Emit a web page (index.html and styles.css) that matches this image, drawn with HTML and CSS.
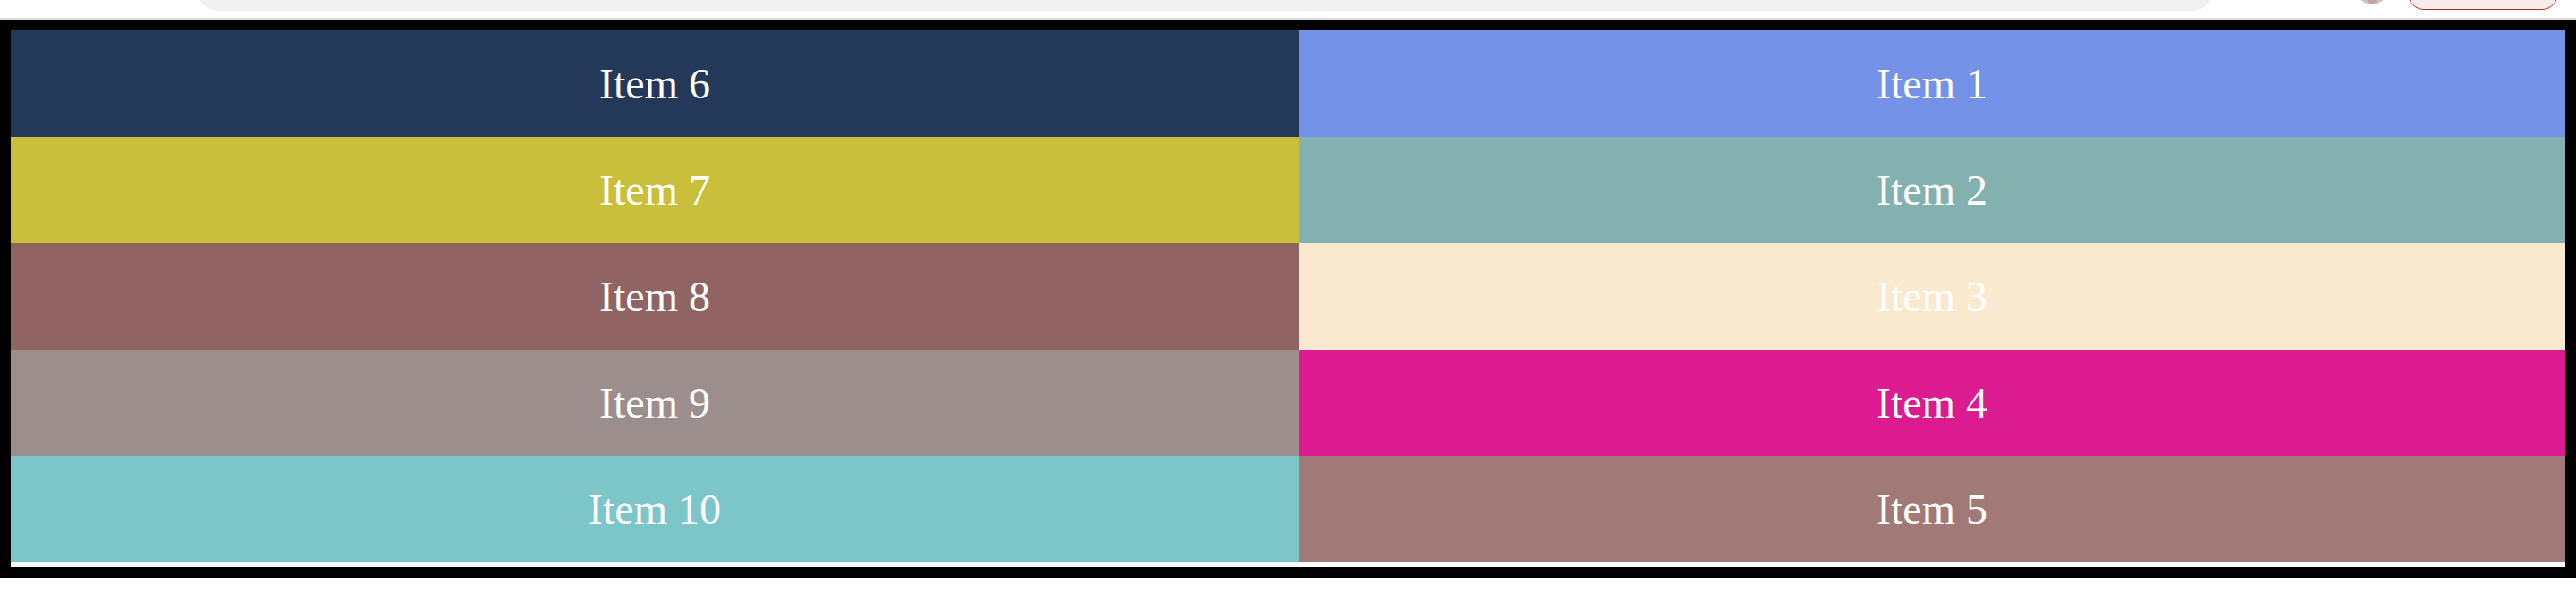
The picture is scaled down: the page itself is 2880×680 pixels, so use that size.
FILE: index.html
```html
<!DOCTYPE html>
<html lang="en">
<head>
  <meta charset="UTF-8">
  <meta name="viewport" content="width=device-width, initial-scale=1.0">
  <title>Items</title>
  <link rel="stylesheet" href="styles.css">
</head>
<body>
  <div class="topbar">
    <div class="search"></div>
    <div class="avatar"><span class="avatar-face"></span></div>
    <div class="pill"></div>
  </div>

  <div class="frame">
    <div class="grid">
      <div class="item c6">Item 6</div>
      <div class="item c1">Item 1</div>
      <div class="item c7">Item 7</div>
      <div class="item c2">Item 2</div>
      <div class="item c8">Item 8</div>
      <div class="item c3">Item 3</div>
      <div class="item c9">Item 9</div>
      <div class="item c4">Item 4</div>
      <div class="item c10">Item 10</div>
      <div class="item c5">Item 5</div>
    </div>
  </div>
</body>
</html>
```

FILE: styles.css
```css
body {
  margin: 0;
  background: #fff;
  font-family: "Liberation Serif", "Times New Roman", serif;
}
.topbar {
  height: 20px;
  overflow: hidden;
  display: flex;
  align-items: flex-end;
  padding: 0 20px 0 220px;
  border-bottom: 2px solid #dcdcdc;
}
.search {
  flex: 1;
  height: 48px;
  margin-bottom: 8px;
  background: #f0f1f3;
  border-radius: 24px;
}
.avatar {
  width: 36px;
  height: 36px;
  margin: 0 22px 15px 159px;
  border-radius: 50%;
  background: #c9c6c4;
  display: flex;
  justify-content: center;
  align-items: flex-end;
  overflow: hidden;
}
.avatar-face {
  width: 12px;
  height: 12px;
  margin-bottom: 1px;
  background: #c9a39d;
  transform: rotate(45deg);
}
.pill {
  width: 166px;
  height: 40px;
  margin-bottom: 9px;
  background: #f6ecec;
  border: 1px solid #b3292b;
  border-radius: 18px;
}
.frame {
  border: 12px solid #000;
  background: #fff;
}
.grid {
  display: grid;
  grid-template-columns: 1440px 1fr;
  grid-auto-rows: 119px;
  padding-bottom: 5px;
}
.item {
  display: flex;
  align-items: center;
  justify-content: center;
  color: #fff;
  font-size: 48px;
}
.c1 { background: #7493e8; }
.c2 { background: #82b1b0; }
.c3 { background: #f8e9cf; }
.c4 { background: #db1b8f; }
.c5 { background: #a17a77; }
.c6 { background: #24385a; }
.c7 { background: #c9bf3a; }
.c8 { background: #8f6462; }
.c9 { background: #9c8e8d; }
.c10 { background: #7cc5c8; }
```
